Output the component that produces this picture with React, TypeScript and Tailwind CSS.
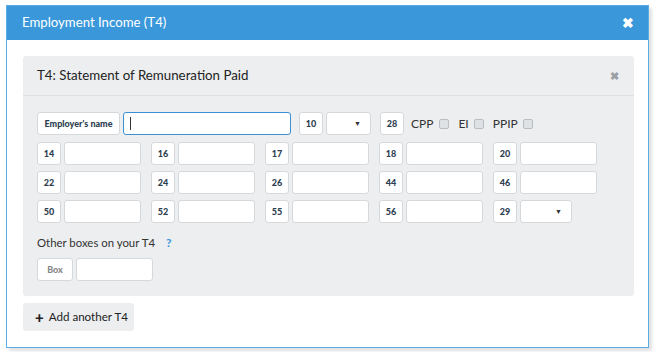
import React from "react";

const font = { fontFamily: "Lato, 'Open Sans', Arial, sans-serif" };

function Label({ children, w = "w-[24px]" }: { children: React.ReactNode; w?: string }) {
  return (
    <div
      className={`${w} h-[23px] shrink-0 flex items-center justify-center bg-white border border-[#d5d9dc] rounded-[3px] text-[9px] font-black text-[#2c3e50]`}
    >
      {children}
    </div>
  );
}

function Input({ w = "w-[77px]" }: { w?: string }) {
  return <div className={`${w} h-[23px] shrink-0 bg-white border border-[#d5d9dc] rounded-[3px]`} />;
}

function Select({ w }: { w: string }) {
  return (
    <div className={`${w} h-[23px] shrink-0 bg-white border border-[#d5d9dc] rounded-[3px] flex items-center justify-end pr-[9px]`}>
      <span className="text-[7px] text-[#333] leading-none">▼</span>
    </div>
  );
}

function Group({ n, select }: { n: string; select?: boolean }) {
  return (
    <div className="flex gap-[3px] w-[104px]">
      <Label>{n}</Label>
      {select ? <Select w="w-[52px]" /> : <Input />}
    </div>
  );
}

function Check() {
  return <div className="w-[10px] h-[10px] rounded-[2px] border border-[#b9bdc1] bg-[#dfe2e4]" />;
}

export default function App() {
  const rows = [
    ["14", "16", "17", "18", "20"],
    ["22", "24", "26", "44", "46"],
    ["50", "52", "55", "56", "29"],
  ];
  return (
    <div className="w-[660px] h-[352px] bg-white pt-[5px] pl-[6px]" style={font}>
      <div className="w-[643px] h-[343px] border border-[#5aaee3] shadow-[3px_3px_3px_rgba(0,0,0,0.12)] flex flex-col">
        <div className="h-[34px] bg-[#3a98da] flex items-center justify-between pl-[15px] pr-[14px] shrink-0">
          <span className="text-white text-[13.2px]">Employment Income (T4)</span>
          <span className="text-white text-[14px] font-bold leading-none">✖</span>
        </div>
        <div className="pt-[16px] pl-[16px] pr-[14px]">
          <div className="bg-[#eceef0] rounded-[3px]">
            <div className="h-[40px] border-b border-[#dde1e3] flex items-center justify-between pl-[14px] pr-[15px]">
              <span className="text-[13.3px] text-[#222]">T4: Statement of Remuneration Paid</span>
              <span className="text-[#9aa0a4] text-[11px] font-bold leading-none">✖</span>
            </div>
            <div className="pt-[16px] pl-[14px] pb-[15px]">
              <div className="flex items-center">
                <Label w="w-[83px]">Employer's name</Label>
                <div className="ml-[3px] w-[168px] h-[23px] bg-white border border-[#3c8fd0] rounded-[3px] flex items-center pl-[6px]">
                  <div className="w-px h-[13px] bg-[#333]" />
                </div>
                <div className="ml-[8px] flex gap-[3px]">
                  <Label>10</Label>
                  <Select w="w-[45px]" />
                </div>
                <div className="ml-[9px]">
                  <Label>28</Label>
                </div>
                <span className="ml-[7px] text-[12px] text-[#333]">CPP</span>
                <div className="ml-[6px]"><Check /></div>
                <span className="ml-[9px] text-[12px] text-[#333]">EI</span>
                <div className="ml-[5px]"><Check /></div>
                <span className="ml-[9px] text-[12px] text-[#333]">PPIP</span>
                <div className="ml-[5px]"><Check /></div>
              </div>
              <div className="mt-[7px] flex flex-col gap-[6px]">
                {rows.map((r, i) => (
                  <div key={i} className="flex gap-[10px]">
                    {r.map((n, j) => (
                      <Group key={n} n={n} select={i === 2 && j === 4} />
                    ))}
                  </div>
                ))}
              </div>
              <div className="mt-[11px] flex items-center text-[11.4px] text-[#333]">
                <span>Other boxes on your T4</span>
                <span className="ml-[11px] text-[#3a98da] font-bold text-[12px]">?</span>
              </div>
              <div className="mt-[6px] flex gap-[3px]">
                <Label w="w-[36px]"><span className="text-[#888]">Box</span></Label>
                <Input />
              </div>
            </div>
          </div>
          <div className="mt-[7px] w-[111px] h-[28px] bg-[#eceef0] rounded-[3px] flex items-center pl-[12px] text-[11.6px] text-[#222]">
            <span className="font-black text-[15px] leading-none mr-[5px]">+</span>
            <span>Add another T4</span>
          </div>
        </div>
      </div>
    </div>
  );
}
